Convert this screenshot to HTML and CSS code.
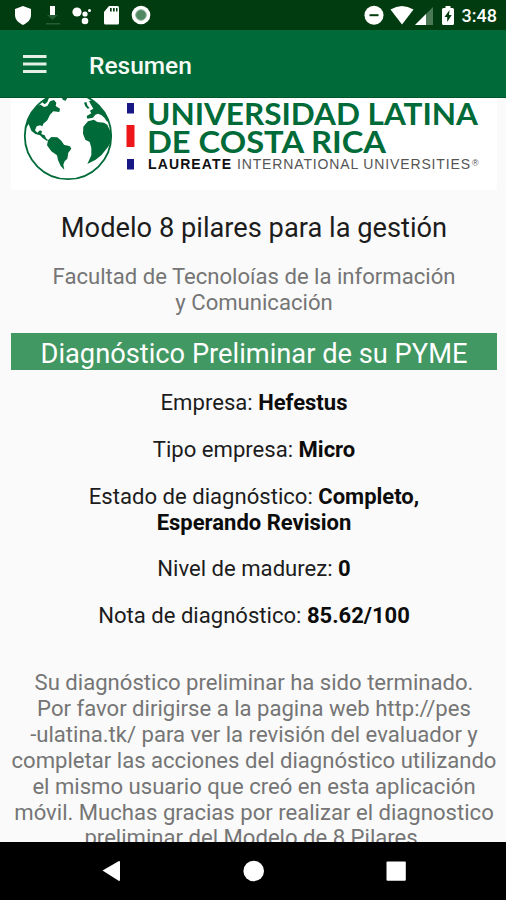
FILE: index.html
```html
<!DOCTYPE html>
<html lang="es">
<head>
<meta charset="utf-8">
<title>Resumen</title>
<link rel="stylesheet" href="styles.css">
</head>
<body>
<div class="screen">
  <div class="status">
    <svg class="status-icons" width="506" height="30" viewBox="0 0 506 30">
      <g fill="#fff">
        <path d="M23 6l8 3v6c0 5-4 8-8 10-4-2-8-5-8-10V9z"/>
        <path d="M50 6h5v9h-5z"/>
        <path d="M47 15h11l-5.500 5z" fill="#245d31"/>
        <path d="M46 23h14v1.500H46z" fill="#245d31"/>
        <circle cx="77" cy="12" r="4.600"/><circle cx="85" cy="14" r="2.600"/><circle cx="85" cy="21" r="3.300"/><circle cx="89.500" cy="10.500" r="1.500"/>
        <path d="M109 6h8.500q1.500 0 1.500 1.500v15.500q0 1.500-1.500 1.500h-12q-1.500 0-1.500-1.500V12z"/>
        <path d="M110 8h1.700v3.500H110zM113 8h1.700v3.500H113zM116 8h1.500v3.500H116z" fill="#003c0f"/>
        <circle cx="141" cy="15" r="9.300"/><circle cx="141" cy="15" r="5.300" fill="#4f8861" stroke="#8db497"/>
        <circle cx="374" cy="15.300" r="9.500"/><path d="M369.500 14.200h9v2h-9z" fill="#003c0f"/>
        <path d="M390.500 9.500q11.500-7 23 0L402 24.500z"/>
        <path d="M433 7v18h-18z" fill="#4b7955"/><path d="M426 14v11h-11z"/>
        <path d="M445.500 6h5v2h2q1.500 0 1.500 1.500v14q0 1.500-1.500 1.500h-9q-1.500 0-1.500-1.500v-14q0-1.500 1.500-1.500h2z"/>
        <path d="M449.500 10l-5 7h2.700v5l4.500-7H449z" fill="#003c0f"/>
      </g>
    </svg>
    <span class="clock">3:48</span>
  </div>
  <header class="bar">
    <svg width="24" height="18" viewBox="0 0 24 18"><path d="M0 1.500h23.500M0 9h23.500M0 16.500h23.500" stroke="#e4efe5" stroke-width="2.800"/></svg>
    <h1>Resumen</h1>
  </header>
  <main class="content">
    <svg class="logo" width="486" height="92" viewBox="11 98 486 92">
      <defs><clipPath id="globe"><circle cx="68" cy="136" r="43"/></clipPath></defs>
      <g clip-path="url(#globe)">
        <g transform="translate(14 92) scale(.3333)" fill="#006b38">
          <path d="M36 108L30 80L60 45L80 38L90 45L100 42L108 28L120 24L127 32L125 42L138 50L136 60L118 58L108 68L100 85L88 95L85 103L78 100L68 103L63 115L70 122L78 115L84 118L82 126L92 130L97 140L104 145L98 146L86 138L78 130L64 126L52 116L44 96Z"/>
          <path d="M84 30L106 14L100 30L92 37ZM142 14H162L155 26L147 24Z"/>
          <path d="M102 145L112 135L130 136L142 146L150 158L168 163L172 170L163 182L160 200L152 208L148 218L151 233L140 222L132 204L129 190L112 178L99 160Z"/>
          <path d="M207 125L208 104L222 88L240 83L250 90L270 92L280 98L292 125L294 145L282 165L262 190L245 203L220 216L232 190L232 167L227 150L214 143Z"/>
          <path d="M218 72L232 64L228 56L238 50L225 28L240 22L268 45L285 72L290 92L278 88L272 78L262 69L252 65L244 68L237 77L220 80Z"/>
          <path d="M210 32L217 30L221 42L227 48L221 50L214 43Z"/>
        </g>
      </g>
      <circle cx="68" cy="136" r="43.200" fill="none" stroke="#006b38" stroke-width="1.800"/>
      <path d="M127 103h7v10.500h-7zM127 159h7v10.500h-7z" fill="#171786"/>
      <path d="M126.500 125h8v22h-8z" fill="#ee151b"/>
      <g class="logo-name">
        <text x="147" y="125" textLength="331" lengthAdjust="spacingAndGlyphs">UNIVERSIDAD LATINA</text>
        <text x="147" y="153" textLength="239" lengthAdjust="spacingAndGlyphs">DE COSTA RICA</text>
      </g>
      <text class="logo-strong" x="148" y="169" textLength="83">LAUREATE</text>
      <text class="logo-light" x="237" y="169" textLength="233">INTERNATIONAL UNIVERSITIES</text>
      <text class="logo-mark" x="472" y="166">®</text>
    </svg>
    <h2>Modelo 8 pilares para la gestión</h2>
    <p class="muted faculty">Facultad de Tecnoloías de la información<br>y Comunicación</p>
    <h3>Diagnóstico Preliminar de su PYME</h3>
    <div class="facts">
      <p>Empresa: <b>Hefestus</b></p>
      <p>Tipo empresa: <b>Micro</b></p>
      <p>Estado de diagnóstico: <b>Completo,<br>Esperando Revision</b></p>
      <p>Nivel de madurez: <b>0</b></p>
      <p>Nota de diagnóstico: <b>85.62/100</b></p>
    </div>
    <p class="muted note">Su diagnóstico preliminar ha sido terminado.<br>Por favor dirigirse a la pagina web http://pes<br>-ulatina.tk/ para ver la revisión del evaluador y<br>completar las acciones del diagnóstico utilizando<br>el mismo usuario que creó en esta aplicación<br>móvil. Muchas gracias por realizar el diagnostico<br>preliminar del Modelo de 8 Pilares.</p>
  </main>
  <nav class="nav">
    <svg width="506" height="58" viewBox="0 842 506 58" fill="#fff">
      <path d="M102.500 870.500l16.500-9.500q1 0 1 1v18q0 1-1 1z"/>
      <circle cx="253.700" cy="871" r="10.300"/>
      <rect x="386.500" y="861.500" width="19.300" height="19.300" rx="1"/>
    </svg>
  </nav>
</div>
</body>
</html>
```
FILE: styles.css
```css
* { box-sizing: border-box; margin: 0; padding: 0; }
body { font-family: Roboto, "Liberation Sans", sans-serif; background: #fafafa; }
svg { display: block; }
.screen { width: 506px; height: 900px; display: flex; flex-direction: column; overflow: hidden; }
.status { height: 30px; flex: none; display: grid; background: #003c0f; }
.status-icons, .clock { grid-area: 1 / 1; }
.clock { justify-self: end; margin-right: 9px; color: #fff; font-size: 18px; font-weight: 500; line-height: 32px; }
.bar { height: 68px; flex: none; display: flex; align-items: center; gap: 42px; padding-left: 23px; background: #006b38; border-bottom: 1px solid #00552c; }
.bar h1 { color: #f6faf5; font-size: 24.5px; font-weight: 500; line-height: 30px; padding-top: 4px; }
.content { flex: 1; min-height: 0; overflow: hidden; padding: 0 9px 0 11px; text-align: center; white-space: nowrap; color: #1c1c1c; font-size: 22.1px; line-height: 25.9px; }
.logo { background: #fff; }
.logo-name { font: 700 30.5px Lato, sans-serif; fill: #006b38; }
.logo-strong { font: 700 14px "Liberation Sans", sans-serif; fill: #111; }
.logo-light { font: 400 14px "Liberation Sans", sans-serif; fill: #555; }
.logo-mark { font: 400 9px "Liberation Sans", sans-serif; fill: #555; }
h2 { margin-top: 21px; font-size: 27.25px; font-weight: 400; line-height: 34px; }
.muted { color: #757575; }
.faculty { margin-top: 19px; }
h3 { margin-top: 17px; height: 37px; background: #429863; color: #fff; font-size: 27.25px; font-weight: 400; line-height: 42px; }
.facts { display: flex; flex-direction: column; gap: 20.8px; margin-top: 20.6px; }
.facts b { font-weight: 700; font-size: 22px; color: #0c0c0c; }
.note { margin-top: 41px; }
.nav { height: 58px; flex: none; background: #000; }
```
